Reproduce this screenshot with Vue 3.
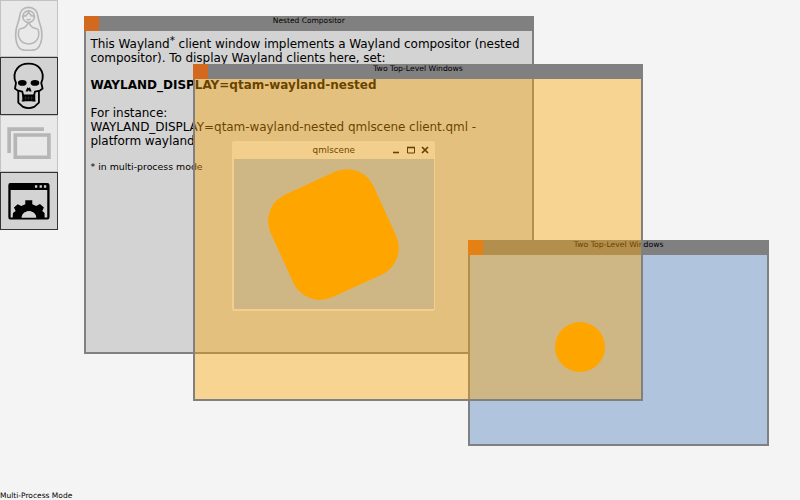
<script setup>
const tools = [
  { id: 'doll', active: false },
  { id: 'skull', active: true },
  { id: 'windows', active: false },
  { id: 'process', active: true },
]
</script>

<template>
  <main class="desktop">
    <nav class="tools">
      <button v-for="t in tools" :key="t.id" class="tool" :class="{ active: t.active }">
        <svg v-if="t.id === 'doll'" viewBox="0 0 172.5 172.5" fill="none" stroke="#000" stroke-width="5">
          <path d="M86 22C70 22 60 33 59 49C58 66 47 77 47 103C47 124 51 138 60 146C66 151 74 151 86 151C98 151 106 151 112 146C121 138 126 124 126 103C126 77 115 66 114 49C113 33 102 22 86 22Z" />
          <circle cx="86" cy="50" r="17.500" />
          <path d="M69 49Q83 46 86 36Q89 46 103 49M86 67Q76 87 59 86M86 67Q96 87 113 86M58 87C50 111 62 132 86 132C110 132 122 111 114 87M80 57Q86 62 92 57" stroke-width="4.500" />
          <path d="M75 48H81M91 48H97" stroke-width="3" />
        </svg>
        <svg v-else-if="t.id === 'skull'" viewBox="0 0 172.500 172.500" fill="none" stroke="#000" stroke-width="5.500" stroke-linejoin="round">
          <path d="M52 100L45 95L48 78C41 62 43 45 52 34C67 15 105 15 120 34C129 45 131 62 124 78L128 95L120 101L105 104L102 117H70L67 104Z" />
          <path d="M55 101V137L69 150Q86 157 103 150L117 137V101" />
          <ellipse cx="67" cy="78" rx="13" ry="8.500" fill="#000" stroke="none" />
          <ellipse cx="105" cy="78" rx="13" ry="8.500" fill="#000" stroke="none" />
          <path d="M82 91L77 104H84L86 100L89 104H95L90 91L86 94Z" fill="#000" stroke="none" />
          <path d="M69 115H104V131H69Z" fill="#000" stroke-width="4" />
          <path d="M73 123H101M77 118V130M86 118V130M95 118V130" stroke="#666" stroke-width="1" />
          <path d="M65 132H74M98 132H107" stroke-width="3" />
        </svg>
        <svg v-else-if="t.id === 'windows'" viewBox="0 0 172.500 172.500" fill="none" stroke="#000" stroke-width="11">
          <path d="M132 42.500H27.500V114" />
          <path d="M46 60H147V127H46Z" />
        </svg>
        <svg v-else viewBox="0 0 172.500 172.500">
          <path fill="#000" fill-rule="evenodd" d="M31 33H142Q149 33 149 40V136Q149 143 142 143H31Q25 143 25 136V40Q25 33 31 33ZM32 54V137H142V54Z" />
          <path d="M105 40h7v7h-7zM119 40h7v7h-7zM132 40h7v7h-7z" fill="#d3d3d3" />
          <path fill="#000" d="M38 138L39 123L47 117L42 107L53 97L64 102L76 97V85H97V97L109 102L120 96L132 107L127 117L134 123V138H109C107 111 67 111 65 138Z" />
          <path d="M65 137C67 112 107 112 109 137Z" fill="#d3d3d3" />
        </svg>
      </button>
    </nav>

    <section class="window nested">
      <header class="bar"><i class="grip"></i><span>Nested Compositor</span></header>
      <div class="copy">
        <p>This Wayland<sup>*</sup> client window implements a Wayland compositor (nested<br>compositor). To display Wayland clients here, set:</p>
        <p class="strong">WAYLAND_DISPLAY=qtam-wayland-nested</p>
        <p class="example">For instance:<br>WAYLAND_DISPLAY=qtam-wayland-nested qmlscene client.qml -<br>platform wayland</p>
        <p class="note">* in multi-process mode</p>
      </div>
      <section class="scene">
        <header class="scene-bar">
          <span>qmlscene</span>
          <svg viewBox="0 0 40 14" fill="none" stroke="#000">
            <path d="M2 9.500H8" stroke-width="1.600" />
            <path d="M16.500 4.500H23.500V10H16.500Z" />
            <path d="M16 4.500H24" stroke-width="1.600" />
            <path d="M31 4L37 10M37 4L31 10" stroke-width="1.700" />
          </svg>
        </header>
        <div class="scene-body"><div class="blob"></div></div>
      </section>
    </section>

    <section class="window blue">
      <header class="bar"><i class="grip"></i><span>Two Top-Level Windows</span></header>
      <div class="ball"></div>
    </section>

    <section class="window amber">
      <header class="bar"><i class="grip"></i><span>Two Top-Level Windows</span></header>
    </section>

    <footer class="status">Multi-Process Mode</footer>
  </main>
</template>

<style>
body { margin: 0; overflow: hidden; }
</style>

<style scoped>
.desktop {
  position: relative;
  display: flex;
  flex-direction: column;
  justify-content: space-between;
  width: 800px;
  height: 500px;
  overflow: hidden;
  background: #f4f4f4;
  color: #000;
  font-family: "DejaVu Sans", sans-serif;
}
.tools { display: flex; flex-direction: column; width: 57.5px; }
.tool {
  position: relative;
  box-sizing: border-box;
  height: 57.4px;
  padding: 0;
  border: 0;
  background: #d3d3d3;
  box-shadow: inset 0 0 0 1px #333;
  opacity: .25;
}
.tool:not(.active) { background: #ccc; }
.tool.active { opacity: 1; }
.tool svg { display: block; width: 57.4px; height: 57.4px; }
.window { position: absolute; box-shadow: inset 0 0 0 2px #808080; }
.nested { left: 84px; top: 16px; width: 449.6px; height: 337.5px; background: #d3d3d3; }
.blue { left: 468px; top: 240px; width: 301.3px; height: 206.3px; background: #b0c4de; }
.amber { left: 193px; top: 64px; width: 450px; height: 337px; background: rgba(255, 165, 0, .4); }
.bar {
  display: flex;
  justify-content: center;
  height: 15.3px;
  background: #808080;
  font-size: 7.7px;
  line-height: 9px;
}
.nested .bar { font-size: 7.5px; }
.grip { position: absolute; left: 0; top: 0; width: 15.4px; height: 15.3px; background: #d2691e; }
.copy { padding: 7.2px 0 0 6.5px; font-size: 12px; line-height: 13.9px; letter-spacing: -.055px; white-space: nowrap; }
.copy p { margin: 0 0 12.9px; }
.copy .strong { margin-bottom: 14px; font-weight: bold; letter-spacing: 0; }
.copy .example { margin-bottom: 11.8px; }
.copy .note { font-size: 9.4px; line-height: 11px; letter-spacing: 0; }
sup { font-size: 10.5px; line-height: 0; vertical-align: 4px; }
.scene {
  position: absolute;
  left: 148.3px;
  top: 125px;
  width: 203px;
  height: 169.8px;
  border-radius: 2px;
  background: #ebebeb;
}
.scene-bar {
  position: relative;
  display: flex;
  justify-content: center;
  height: 18.4px;
  font-size: 8.8px;
  line-height: 18px;
}
.scene-bar svg { position: absolute; right: 4px; top: 2px; width: 40px; height: 14px; }
.scene-body {
  display: flex;
  justify-content: center;
  align-items: center;
  height: 149.7px;
  margin: 0 1.6px;
  background: #b0c4de;
}
.blob { width: 113.2px; height: 113.2px; border-radius: 29.3px; background: #ffa500; transform: rotate(-24.5deg); }
.ball { width: 50px; height: 50px; margin: 66.7px 0 0 86.6px; border-radius: 50%; background: #ffa500; }
.status { font-size: 7.5px; line-height: 9px; }
</style>
